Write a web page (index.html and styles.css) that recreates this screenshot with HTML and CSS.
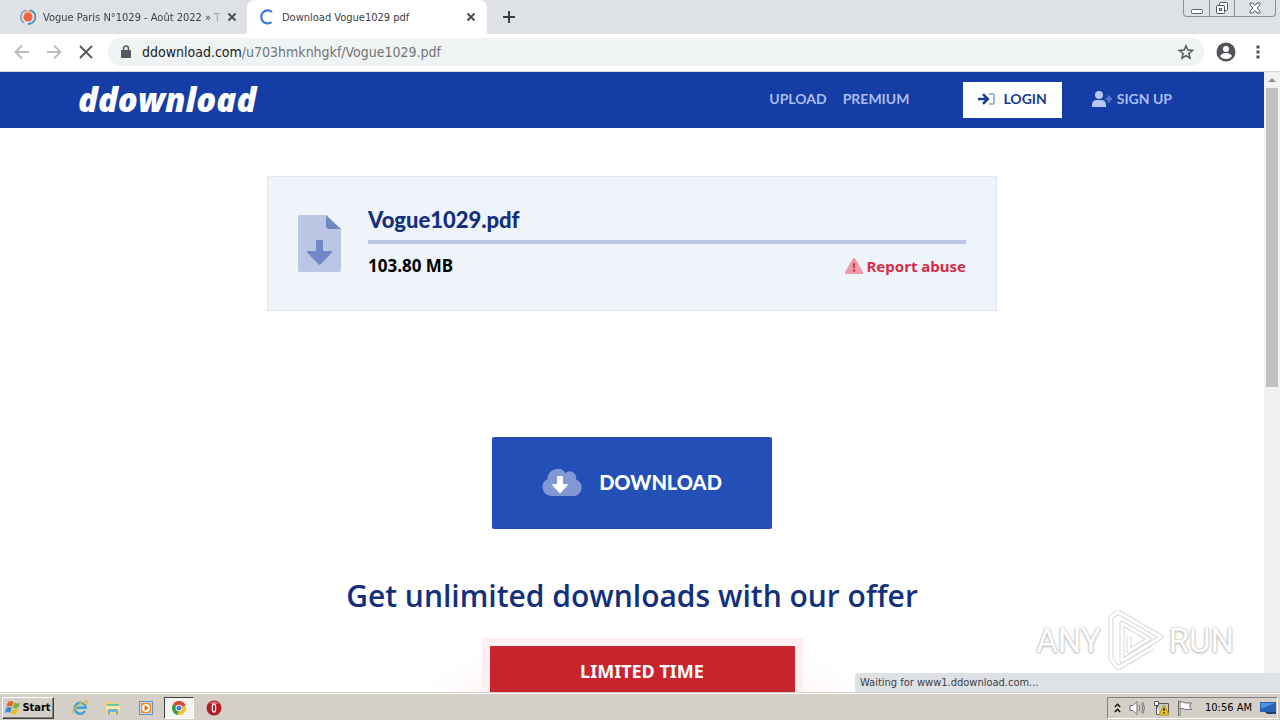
FILE: index.html
```html
<!DOCTYPE html>
<html lang="en">
<head>
<meta charset="utf-8">
<title>Download Vogue1029 pdf</title>
<link rel="stylesheet" href="styles.css">
</head>
<body>
<div class="tabstrip">
  <div class="tab tab-back">
    <svg class="icon16" viewBox="0 0 16 16"><circle cx="8" cy="8" r="4.500" fill="#f0603c"/><path d="M6 1.200A7 7 0 0 0 4 13.800" fill="none" stroke="#7f9fc0" stroke-width="1.500"/><path d="M10 1.200A7 7 0 0 1 8 15" fill="none" stroke="#3c8fc5" stroke-width="1.800"/><path d="M5 4q3-4 6 0" fill="none" stroke="#f8a070" stroke-width="1.500"/></svg>
    <span class="tab-title faded">Vogue Paris N°1029 - Août 2022 » T</span>
    <button class="tab-x" aria-label="Close tab"><svg width="10" height="10" viewBox="0 0 10 10"><path d="M1.500 1.500l7 7m0-7l-7 7" stroke="#45484c" stroke-width="1.800"/></svg></button>
  </div>
  <div class="tab tab-active">
    <svg class="icon16" viewBox="0 0 16 16"><path d="M13 3A6.500 6.500 0 1 0 12.600 13.200" fill="none" stroke="#3f78d8" stroke-width="2.200"/></svg>
    <span class="tab-title">Download Vogue1029 pdf</span>
    <button class="tab-x" aria-label="Close tab"><svg width="10" height="10" viewBox="0 0 10 10"><path d="M1.500 1.500l7 7m0-7l-7 7" stroke="#45484c" stroke-width="1.800"/></svg></button>
  </div>
  <button class="newtab" aria-label="New tab"><svg width="12" height="12" viewBox="0 0 12 12"><path d="M6 0v12M0 6h12" stroke="#3c4043" stroke-width="2"/></svg></button>
  <div class="winctl">
    <button class="wc" aria-label="Minimize"><svg width="12" height="14" viewBox="0 0 12 14"><rect x=".5" y="8.500" width="11" height="4" rx="1" fill="#fff" stroke="#5b6068"/></svg></button>
    <button class="wc" aria-label="Restore"><svg width="14" height="14" viewBox="0 0 14 14"><rect x="4.500" y="1.500" width="8" height="8" rx="1" fill="#fff" stroke="#4f545c"/><rect x="1.500" y="4.500" width="8" height="8" rx="1" fill="#fff" stroke="#4f545c"/><rect x="4.500" y="7.500" width="2" height="2" fill="none" stroke="#4f545c"/></svg></button>
    <button class="wc wc-close" aria-label="Close"><svg width="12" height="12" viewBox="0 0 12 12"><path d="M1 1h3l2 2.500L8 1h3v2L8 6l3 3v2H8L6 8.500 4 11H1V9l3-3-3-3z" fill="#fff" stroke="#5b6068"/></svg></button>
  </div>
</div>
<div class="toolbar">
  <button class="tool" aria-label="Back"><svg class="icon16" viewBox="0 0 16 16"><path d="M15 8H2M8 1.500L1.500 8 8 14.500" fill="none" stroke="#b9bbbe" stroke-width="1.800"/></svg></button>
  <button class="tool" aria-label="Forward"><svg class="icon16" viewBox="0 0 16 16"><path d="M1 8h13M8 1.500L14.500 8 8 14.500" fill="none" stroke="#b9bbbe" stroke-width="1.800"/></svg></button>
  <button class="tool" aria-label="Stop"><svg class="icon16" viewBox="0 0 16 16"><path d="M2 2l12 12M14 2L2 14" stroke="#54575b" stroke-width="1.800"/></svg></button>
  <div class="omnibox">
    <svg width="10" height="14" viewBox="0 0 10 14"><rect x="0" y="5" width="10" height="8" rx="1" fill="#55585c"/><path d="M2.500 6V3.500a2.500 2.500 0 0 1 5 0V6" fill="none" stroke="#55585c" stroke-width="1.500"/></svg>
    <span class="url">ddownload.com<span class="path">/u703hmknhgkf/Vogue1029.pdf</span></span>
    <button class="star" aria-label="Bookmark"><svg class="icon16" viewBox="0 0 16 16"><path d="M8 1.800l1.800 4.300 4.700.4-3.600 3 1.100 4.600L8 11.700l-4 2.400 1.100-4.600-3.600-3 4.700-.4z" fill="none" stroke="#55585c" stroke-width="1.500"/></svg></button>
  </div>
  <button class="profile" aria-label="Profile"><svg width="20" height="20" viewBox="0 0 20 20"><circle cx="10" cy="10" r="9.500" fill="#505358"/><circle cx="10" cy="7" r="3" fill="#fff"/><path d="M4 14q2-3 6-3t6 3q-2 3-6 3t-6-3z" fill="#fff"/></svg></button>
  <button class="more" aria-label="Menu"><svg width="4" height="14" viewBox="0 0 4 14"><path d="M.5.500h3v3h-3zM.5 5.500h3v3h-3zM.5 10.500h3v3h-3z" fill="#505358"/></svg></button>
</div>
<div class="viewport">
  <div class="page">
    <header class="site-head">
      <a class="logo" href="#">ddownload</a>
      <nav class="nav">
        <a href="#">UPLOAD</a>
        <a href="#">PREMIUM</a>
        <a class="login" href="#"><svg width="17" height="12" viewBox="0 0 17 12"><path d="M11 1h4q1 0 1 1v8q0 1-1 1h-4" fill="none" stroke="#a6b4dc" stroke-width="2"/><path d="M0 6h9M5 1.200L9.800 6 5 10.800" fill="none" stroke="#173a94" stroke-width="2.500"/></svg>LOGIN</a>
        <a class="signup" href="#"><svg width="20" height="16" viewBox="0 0 20 16"><circle cx="7" cy="4" r="4" fill="#b6c5f3"/><path d="M0 16v-2q0-5 5-5h4q5 0 5 5v2z" fill="#b6c5f3"/><path d="M17 4.500v7M13.500 8h6.500" stroke="#5774cb" stroke-width="2.500"/></svg>SIGN UP</a>
      </nav>
    </header>
    <main class="main">
      <section class="file">
        <svg class="file-icon" width="43" height="57" viewBox="0 0 43 57"><path d="M2 0h26v14h15v41q0 2-2 2H2q-2 0-2-2V2q0-2 2-2z" fill="#bac7e4"/><path d="M28 0l15 14H30q-2 0-2-2z" fill="#7286bf"/><path d="M19 25h5q1 0 1 1v10h8q2 0 1 1.500L23 49q-1.500 1.500-3 0L9 37.500Q8 36 10 36h8V26q0-1 1-1z" fill="#7187c6"/></svg>
        <div class="file-body">
          <h1 class="file-name">Vogue1029.pdf</h1>
          <div class="file-meta">
            <span class="size">103.80 MB</span>
            <a class="abuse" href="#"><svg width="18" height="16" viewBox="0 0 19 17"><path d="M9.500 0q1 0 1.500 1l8 14q.5 2-1 2H1q-1.500 0-1-2L8 1q.5-1 1.500-1z" fill="#ec9ba7"/><path d="M8.300 5.500h2.400l-.4 5.500H8.700zM8.300 12.300h2.400v2.400H8.300z" fill="#cf3049"/></svg>Report abuse</a>
          </div>
        </div>
      </section>
      <button class="download"><svg width="40" height="28" viewBox="0 0 40 28"><path d="M9 28a9 9 0 0 1-3.500-17A10 10 0 0 1 23.500 5 6.500 6.500 0 0 1 34 11.500 8.500 8.500 0 0 1 32 28z" fill="#8198d5"/><path d="M16 8h4q1 0 1 1v7h4q1.500 0 .5 1.500L19 24.500q-1 1-2 0L10.500 17.500Q9.500 16 11 16h4V9q0-1 1-1z" fill="#fff"/></svg>DOWNLOAD</button>
      <h2 class="offer">Get unlimited downloads with our offer</h2>
      <div class="promo"><div class="promo-title">LIMITED TIME</div></div>
    </main>
  </div>
  <div class="scroll"><span class="up"></span><span class="thumb"></span></div>
  <div class="watermark"><span>ANY</span><svg width="60" height="64" viewBox="0 0 60 64"><g fill="none" stroke="#d9d9d9" stroke-width="5" stroke-linejoin="round"><path d="M13 4l43 25-39 24V15l27 16-20 12V27"/><path d="M13 4L6 9v42l7 9 34-20"/></g><g fill="none" stroke="#fff" stroke-width="3" stroke-linejoin="round"><path d="M13 4l43 25-39 24V15l27 16-20 12V27"/><path d="M13 4L6 9v42l7 9 34-20"/></g></svg><span>RUN</span></div>
  <div class="status">Waiting for www1.ddownload.com...</div>
</div>
<div class="taskbar">
  <button class="start"><svg width="16" height="15" viewBox="0 0 16 15"><path d="M3 2q3-2 5.500 0L7 7Q4.500 5 1.500 7z" fill="#e9602b"/><path d="M9.500 2.500q3 2 5.500 0L13.500 7.500q-3 2-5.500 0z" fill="#72b43d"/><path d="M1.200 8q3-2 5.500 0L5.200 13q-2.500-2-5.200 0z" fill="#3a88d8"/><path d="M7.600 8.500q3 2 5.500 0L11.600 13.500q-3 2-5.500 0z" fill="#f2b822"/></svg>Start</button>
  <button class="app" aria-label="Internet Explorer"><svg class="icon16" viewBox="0 0 16 16"><path d="M13 11a5.500 5.500 0 1 1 .7-3.300H4" fill="none" stroke="#3fa5dc" stroke-width="2.500"/><path d="M2 14Q-1 11 5 6t10-5q1 2-1 4" fill="none" stroke="#e8b93f" stroke-width="1.300"/></svg></button>
  <button class="app" aria-label="Explorer"><svg class="icon16" viewBox="0 0 16 16"><path d="M1 2h5l1 1h7v11H1z" fill="#f3d67b"/><path d="M2 4h12v3H2z" fill="#6cc8a0"/><path d="M1 6h14v4H1z" fill="#fae9a7"/><path d="M3 15v-5q0-1 1-1h8q1 0 1 1v5h-2v-3H5v3z" fill="#6eb5dc"/></svg></button>
  <button class="app" aria-label="Media Player"><svg class="icon16" viewBox="0 0 16 16"><path d="M1 1h14v14H1z" fill="#5b94c4"/><path d="M2 2h12v12H2z" fill="#c3ddf0"/><path d="M3 3h10v10H3z" fill="#f28a1c"/><circle cx="8" cy="8" r="4" fill="#fff"/><path d="M6.500 5L11 8l-4.500 3z" fill="#e8730c"/></svg></button>
  <button class="app app-on" aria-label="Chrome"><svg class="icon16" viewBox="0 0 16 16"><circle cx="8" cy="8" r="7" fill="#f3c22b"/><path d="M8 8L2 4.400A7 7 0 0 1 14.500 5.500z" fill="#dc4637"/><path d="M8 8L2 4.400A7 7 0 0 0 7 15z" fill="#34a25a"/><circle cx="8" cy="8" r="3.300" fill="#fff"/><circle cx="8" cy="8" r="2.500" fill="#4382dc"/></svg></button>
  <button class="app" aria-label="Opera"><svg class="icon16" viewBox="0 0 16 16"><circle cx="8" cy="8" r="7.500" fill="#b61c24"/><path d="M3 4q5-5 10 0-5-1-10 0z" fill="#e07474"/><ellipse cx="8" cy="8" rx="2.300" ry="4.800" fill="#fff"/><ellipse cx="8" cy="8" rx="1" ry="3.500" fill="#a8131b"/></svg></button>
  <div class="tray">
    <svg width="7" height="10" viewBox="0 0 7 10"><path d="M.8 4l2.700-2.700L6.200 4M.8 9l2.700-2.700L6.200 9" fill="none" stroke="#111" stroke-width="1.500"/></svg>
    <svg class="icon16" viewBox="0 0 16 16"><path d="M1 5.500h3L8 1.500v13l-4-4H1z" fill="#fff" stroke="#6d6d6d"/><path d="M10 5q2 3 0 6M12 3q3.500 5 0 10M14 2q3 6 0 12" fill="none" stroke="#777"/></svg>
    <svg class="icon16" viewBox="0 0 16 16"><path d="M4.500 3.500h11v9h-11z" fill="#c5c9c6" stroke="#555"/><path d="M1.500 1.500h4v4h-4zM3.500 5.500v9h4" fill="#fff" stroke="#555"/><path d="M11 5l5 10H6z" fill="#f2c51b" stroke="#b8930f"/><path d="M10.300 8h1.400v3h-1.400zM10.300 12h1.400v1.500h-1.400z" fill="#222"/></svg>
    <svg class="icon16" viewBox="0 0 16 16"><path d="M2.500 2q3-1 6 1h6l-2 3 2 3.500h-6q-3-2-6-.5z" fill="#fff" stroke="#6d6d6d"/><path d="M1.500 1v14.500h1.500V1z" fill="#fff" stroke="#6d6d6d"/></svg>
    <span class="clock">10:56 AM</span>
    <svg class="icon16" viewBox="0 0 16 16"><path d="M0 2h16v10H0z" fill="#2862b5"/><path d="M1 3h14L1 9z" fill="#4b91dc"/><path d="M5 12h11v2H7z" fill="#253e6b"/></svg>
  </div>
</div>
</body>
</html>
```
FILE: styles.css
```css
* { box-sizing: border-box; }
body { margin: 0; height: 100vh; display: flex; flex-direction: column; overflow: hidden; background: #fff; font-family: "Noto Sans", sans-serif; font-size: 11px; color: #222; }
button { border: 0; padding: 0; margin: 0; background: none; font: inherit; color: inherit; display: flex; align-items: center; justify-content: center; }
a { color: inherit; text-decoration: none; }
svg { display: block; flex: none; }
.icon16 { width: 16px; height: 16px; }
.tab-title, .url, .status, .start, .clock { font-family: "DejaVu Sans Condensed", "DejaVu Sans", sans-serif; }

.tabstrip { display: flex; height: 34px; flex: none; background: #dee1e6; }
.tab { display: flex; align-items: center; gap: 7px; }
.tab-back { width: 247px; gap: 4px; padding: 0 10px 0 20px; }
.tab-back .icon16 { margin-right: 3px; }
.tab-active { width: 240px; padding: 0 11px 0 12px; background: #fff; border-radius: 8px 8px 0 0; }
.tab-title { flex: 1; white-space: nowrap; color: #3c4043; }
.faded { mask-image: linear-gradient(to right, #000 92%, transparent); }
.tab-x { width: 10px; height: 16px; }
.newtab { width: 44px; }
.winctl { display: flex; margin-left: auto; margin-right: 4px; height: 17px; border: 1px solid #8b9098; border-top: 0; border-radius: 0 0 4px 4px; }
.wc { width: 25px; }
.wc + .wc { border-left: 1px solid #8b9098; }
.wc-close { width: 41px; }

.toolbar { display: flex; align-items: center; height: 38px; flex: none; padding: 0 14px 2px; background: #fff; border-bottom: 1px solid #d5dade; }
.tool { width: 16px; margin-right: 16px; }
.omnibox { flex: 1; display: flex; align-items: center; gap: 11px; height: 28px; margin-left: -2px; padding: 0 10px 0 13px; border-radius: 14px; background: #f0f3f4; }
.url { flex: 1; font-size: 14px; color: #202124; }
.path { color: #70757a; }
.profile { margin-left: 12px; }
.more { margin: 0 6px 0 20px; }

.viewport { position: relative; display: flex; flex: 1; min-height: 0; overflow: hidden; }
.page { flex: 1; overflow: hidden; }
.site-head { display: flex; align-items: center; justify-content: space-between; height: 56px; padding: 0 92px 0 78px; background: #143da6; }
.logo { font-family: "Open Sans", sans-serif; font-weight: 800; font-style: italic; font-size: 33px; line-height: 40px; color: #fff; }
.nav { display: flex; align-items: center; gap: 16px; font-family: Lato, sans-serif; font-weight: 700; font-size: 14px; line-height: 16px; color: #a9bcf0; }
.nav a { padding-bottom: 2px; }
.nav .login { display: flex; align-items: center; gap: 8px; height: 36px; margin-left: 38px; padding: 0 15px 2px; background: #fff; color: #173a94; }
.signup { display: flex; align-items: center; gap: 5px; margin-left: 14px; }

.main { display: flex; flex-direction: column; align-items: center; padding-top: 48px; }
.file { display: flex; gap: 27px; width: 730px; max-width: 100%; height: 135px; padding: 30px; border: 1px solid #dfe8ef; background: #eef4fa; }
.file-icon { margin-top: 8px; }
.file-body { flex: 1; }
.file-name { margin: 0; height: 37px; border-bottom: 4px solid #b9c6e8; font-family: Lato, sans-serif; font-weight: 900; font-size: 22px; line-height: 26px; color: #14307c; }
.file-meta { display: flex; justify-content: space-between; align-items: center; margin-top: 10px; line-height: 24px; font-weight: 700; }
.size { font-size: 17px; color: #000; }
.abuse { display: flex; align-items: center; gap: 4px; font-size: 15px; color: #d42f47; }
.download { gap: 17px; width: 280px; height: 92px; margin-top: 126px; padding-bottom: 2px; border-radius: 2px; background: #234fb7; color: #fff; font-family: Lato, sans-serif; font-weight: 900; font-size: 20px; }
.offer { margin: 44px 0 0; font-family: "Open Sans", "Noto Sans", sans-serif; font-weight: 600; font-size: 30px; line-height: 46px; color: #14307c; }
.promo { width: 305px; height: 320px; margin: 27px 0 0 20px; background: #fff; box-shadow: 0 0 0 8px #fdf0f2, 0 80px 50px 20px #f9c8ce; }
.promo-title { padding: 12px; background: #c8242d; text-align: center; font-size: 18px; font-weight: 700; line-height: 26px; color: #fff; }

.scroll { display: flex; flex-direction: column; align-items: center; width: 16px; background: #f1f1f1; }
.up { width: 0; margin: 6px 0; border: 4px solid transparent; border-top: 0; border-bottom-color: #8f8f8f; }
.thumb { width: 12px; height: 299px; background: #c1c1c1; }
.watermark { position: absolute; right: 46px; bottom: 20px; display: flex; align-items: center; gap: 4px; font-family: Roboto, sans-serif; font-size: 33px; color: #fff; text-shadow: 0 0 2px #aaa, 0 1px 3px #bbb; }
.status { position: absolute; right: 0; bottom: 0; width: 425px; padding: 0 5px; border-radius: 3px 0 0 0; background: #dee1e6; line-height: 19px; color: #3c4043; }

.taskbar { display: flex; align-items: center; height: 28px; flex: none; padding: 2px 2px 0; border-top: 1px solid #d4d0c8; box-shadow: inset 0 1px #fff; background: #d4d0c8; }
.start { gap: 1px; width: 52px; height: 22px; margin-right: 9px; border: 1px solid; border-color: #fff #404040 #404040 #fff; box-shadow: inset -1px -1px #808080; font-weight: 700; color: #000; }
.app { width: 33px; height: 22px; }
.app-on { width: 30px; margin: 0 3px 0 2px; border: 1px solid; border-color: #404040 #fff #fff #404040; background: #f5f4f2; }
.tray { display: flex; align-items: center; gap: 8px; height: 22px; margin-left: auto; padding: 0 1px 0 6px; border: 1px solid; border-color: #808080 #fff #fff #808080; }
.clock { margin-left: 4px; color: #000; }
```
